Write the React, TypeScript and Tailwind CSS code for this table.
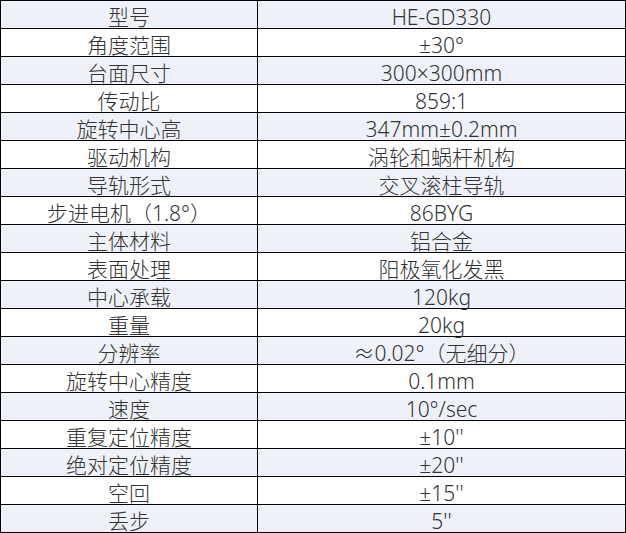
const rows: [string, string][] = [
  ['型号', 'HE-GD330'],
  ['角度范围', '±30°'],
  ['台面尺寸', '300×300mm'],
  ['传动比', '859:1'],
  ['旋转中心高', '347mm±0.2mm'],
  ['驱动机构', '涡轮和蜗杆机构'],
  ['导轨形式', '交叉滚柱导轨'],
  ['步进电机（1.8°）', '86BYG'],
  ['主体材料', '铝合金'],
  ['表面处理', '阳极氧化发黑'],
  ['中心承载', '120kg'],
  ['重量', '20kg'],
  ['分辨率', '≈0.02°（无细分）'],
  ['旋转中心精度', '0.1mm'],
  ['速度', '10°/sec'],
  ['重复定位精度', '±10\'\''],
  ['绝对定位精度', '±20\'\''],
  ['空回', '±15\'\''],
  ['丢步', '5\'\''],
];

export default function App() {
  return (
    <div
      className="w-[626px] border-t border-l border-r border-black bg-white text-[#333333] text-[21px] font-light"
      style={{ fontFamily: '"Noto Sans", "Noto Sans CJK SC", sans-serif' }}
    >
      {rows.map(([k, v], i) => (
        <div
          key={k}
          className={`grid grid-cols-[257px_1fr] h-[28px] border-b border-black ${i % 2 === 0 ? 'bg-[#eef2f8]' : 'bg-white'}`}
        >
          <div className="flex items-center justify-center border-r border-black leading-none pt-[5px]">{k}</div>
          <div className="flex items-center justify-center leading-none pt-[5px]">{v}</div>
        </div>
      ))}
    </div>
  );
}
